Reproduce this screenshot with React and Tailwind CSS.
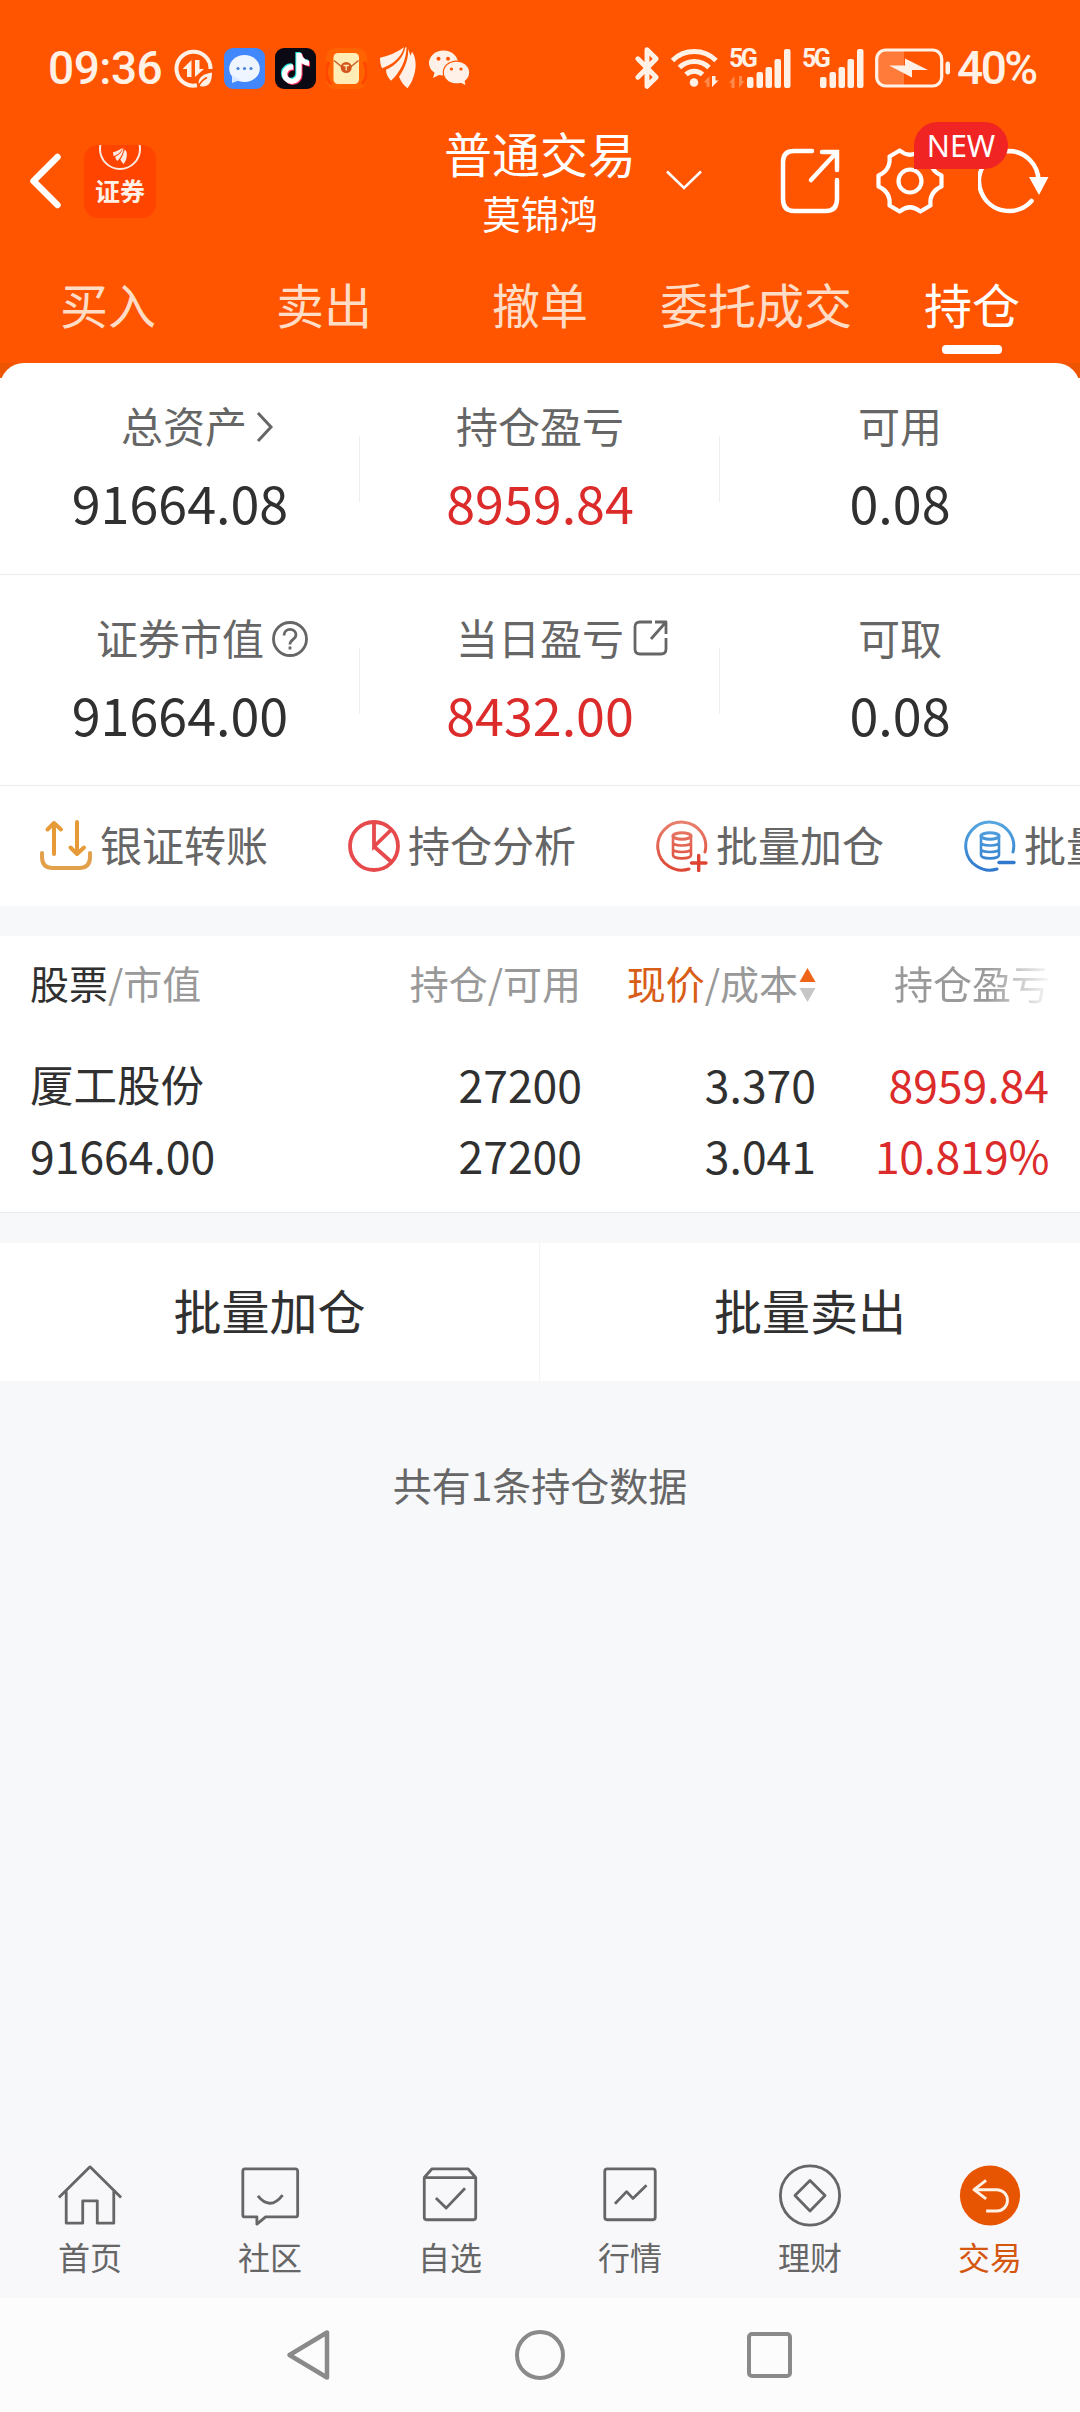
import { Bluetooth } from 'lucide-react'
import { FaTiktok } from 'react-icons/fa6'

const tabs = ['买入', '卖出', '撤单', '委托成交', '持仓']

function FlowIcon() {
  return (
    <svg width="39" height="39" viewBox="0 0 39 39" fill="none" className="shrink-0">
      <path d="M36.500 20A17 17 0 1 0 23 36.300" stroke="#fff1e6" strokeWidth="4" />
      <path d="M17.500 28V11L8.500 20h4.500v8zM21 11v17l9-8h-4.500v-9z" fill="#fff1e6" />
      <path d="M38 23.500c0 9-3 14-9 14-2 0-3-.5-4-1.500-2-6 3-11 13-12.500z" fill="#fff1e6" />
      <path d="M24 38.500c2-5 5-8 9-10" stroke="#ff5500" strokeWidth="1.500" />
    </svg>
  )
}

function MessageIcon() {
  return (
    <svg width="41" height="41" viewBox="0 0 41 41" className="shrink-0">
      <rect width="41" height="41" rx="9" fill="#4287fb" />
      <ellipse cx="20.500" cy="20.500" rx="15.300" ry="13.500" fill="#eef5ff" />
      <path d="M8 27v8l8-3z" fill="#d9e9ff" />
      <circle cx="14" cy="20.500" r="1.600" fill="#4a83dc" />
      <circle cx="20.500" cy="20.500" r="1.600" fill="#4a83dc" />
      <circle cx="27" cy="20.500" r="1.600" fill="#4a83dc" />
    </svg>
  )
}

function TiktokIcon() {
  return (
    <div className="relative h-[41px] w-[41px] shrink-0 rounded-[9px] bg-[#0b0a14]">
      <FaTiktok size={31} className="absolute left-[4px] top-[4px] text-[#25e4df]" />
      <FaTiktok size={31} className="absolute left-[6px] top-[6px] text-[#f5315c]" />
      <FaTiktok size={31} className="absolute left-[5px] top-[5px] text-white" />
    </div>
  )
}

function EnvelopeIcon() {
  return (
    <svg width="41" height="41" viewBox="0 0 41 41" className="shrink-0">
      <rect width="41" height="41" rx="9" fill="#ff6200" />
      <path d="M3 14a19 19 0 0 0 2 22M38 14a19 19 0 0 1-2 22" stroke="#ff4500" strokeWidth="3" fill="none" />
      <rect x="7.500" y="5" width="25.500" height="31" rx="4.500" fill="#ffedb5" />
      <path d="M8 12.500l8 6.500M32.500 12.500l-8 6.500" stroke="#c8642b" strokeWidth="1.600" />
      <circle cx="20.200" cy="19.500" r="5.500" fill="#d3541c" />
      <path d="M17.500 17.500h5.500M20.200 17.500v5" stroke="#ffedb5" strokeWidth="1.300" />
    </svg>
  )
}

function Swoosh({ size, color }) {
  return (
    <svg width={size} height={size * 1.15} viewBox="0 0 36 41" fill={color} className="shrink-0">
      <path d="M24 0C17 5 9 8.500 0 10.500c0 4 .5 7 2 10.500C12 17.500 21 11 24 0z" />
      <path d="M25.300 0C24 9 17 17.500 6 22.500c0 4 2 8 5 11C20 25 26.500 13 26.500 0z" />
      <path d="M28 1.500c1 10-3.500 20-9 28 2 5 5 9 8.500 11.500C35 32 39 14 32 4.500l-1.500 4z" />
    </svg>
  )
}

function WechatIcon() {
  return (
    <svg width="41" height="36" viewBox="0 0 41 36" className="shrink-0">
      <ellipse cx="14.500" cy="13" rx="14.500" ry="12.500" fill="#fff1e8" />
      <path d="M6 21l-2 7 8-4z" fill="#fff1e8" />
      <ellipse cx="27.500" cy="22.500" rx="13.800" ry="12" fill="#ff5500" />
      <ellipse cx="27.500" cy="22.500" rx="12.600" ry="10.800" fill="#fff1e8" />
      <path d="M30 32l6.500 3-1.500-6z" fill="#fff1e8" />
      <circle cx="9.500" cy="8.800" r="2" fill="#ff5500" />
      <circle cx="19" cy="8.800" r="2" fill="#ff5500" />
      <circle cx="22.500" cy="19" r="1.600" fill="#ff5500" />
      <circle cx="32" cy="19" r="1.600" fill="#ff5500" />
    </svg>
  )
}

function WifiIcon() {
  return (
    <svg width="48" height="39" viewBox="0 0 48 39" fill="none" className="shrink-0">
      <g stroke="#fff1e6" strokeWidth="5">
        <path d="M1.500 11.500a31 31 0 0 1 43.500 0" />
        <path d="M8.500 18.500a21 21 0 0 1 29.500 0" />
        <path d="M15 25.500a12 12 0 0 1 16.500 0" />
      </g>
      <circle cx="23" cy="33.500" r="4.300" fill="#fff1e6" />
      <path d="M38.500 38V27l-6 6.500h3V38z" fill="#ff8a4d" />
      <path d="M41 27v11l6.500-6.500h-3V27z" fill="#fff1e6" />
    </svg>
  )
}

function SignalIcon({ arrows }) {
  return (
    <div className="relative h-[39px] w-[62px] shrink-0">
      <span className="absolute left-0 top-[-2px] font-['Roboto',sans-serif] text-[25px] font-bold leading-[24px] tracking-[-2.500px]">5G</span>
      <svg width="62" height="39" viewBox="0 0 62 39">
        {arrows && <path d="M5.500 39V27L0 34h2.500v5zM10 27v12l5.500-7H13v-5z" fill="#ff8a4d" />}
        <g fill="#fff1e6">
          <rect x="18" y="28" width="6.500" height="11" rx="2" />
          <rect x="27.500" y="23" width="6.500" height="16" rx="2" />
          <rect x="36.500" y="18" width="6.500" height="21" rx="2" />
          <rect x="45.500" y="10" width="6.500" height="29" rx="2" />
          <rect x="55" y="0" width="6.500" height="39" rx="2" />
        </g>
      </svg>
    </div>
  )
}

function BatteryIcon() {
  return (
    <svg width="76" height="40" viewBox="0 0 76 40" className="shrink-0">
      <path d="M9 3h20v34H9c-4 0-6-3-6-6V9c0-3 2-6 6-6z" fill="#ff7b3a" />
      <rect x="1.700" y="2" width="65" height="36" rx="9" fill="none" stroke="#fff1e6" strokeWidth="3.200" />
      <path d="M14 17.500h16v-7l23 11.500H37v7.500z" fill="#fff1e6" />
      <rect x="70.500" y="13.500" width="4.500" height="13" rx="2.200" fill="#fff1e6" />
    </svg>
  )
}

function StatusBar() {
  return (
    <div className="flex h-[136px] items-center text-[#fff1e6]">
      <span className="ml-[48px] w-[126px] font-['Roboto',sans-serif] text-[46px] font-medium leading-none tracking-[-0.500px]">09:36</span>
      <FlowIcon />
      <div className="ml-[11px] flex items-center gap-[10px]">
        <MessageIcon />
        <TiktokIcon />
        <EnvelopeIcon />
      </div>
      <div className="ml-[13px] flex items-center gap-[13px]">
        <Swoosh size={36} color="#fff1e8" />
        <WechatIcon />
      </div>
      <div className="ml-auto mr-[42px] flex items-center">
        <Bluetooth size={44} strokeWidth={2.700} className="mr-[2px]" />
        <WifiIcon />
        <div className="ml-[10px] mr-[11px] flex gap-[11px]">
          <SignalIcon arrows />
          <SignalIcon />
        </div>
        <BatteryIcon />
        <span className="ml-[6px] w-[81px] whitespace-nowrap font-['Roboto',sans-serif] text-[46px] font-medium leading-none tracking-[-2.500px]">40%</span>
      </div>
    </div>
  )
}

function TitleBar() {
  return (
    <div className="flex h-[118px] items-start pt-[2px]">
      <svg width="34" height="56" viewBox="0 0 34 56" fill="none" stroke="#fff" strokeWidth="6.500" strokeLinecap="round" strokeLinejoin="round" className="ml-[29px] mt-[15px]">
        <path d="M28.500 4L4.500 28l24 24" />
      </svg>
      <div className="ml-[21px] mt-[7px] flex h-[73px] w-[72px] flex-col items-center overflow-hidden rounded-[14px] bg-[#ff4400]">
        <div className="mt-[-17px] flex h-[42px] w-[42px] shrink-0 items-end justify-center rounded-full border-2 border-[#ffe9e0] pb-[4px]">
          <Swoosh size={14} color="#ffe9e0" />
        </div>
        <span className="mt-[5px] text-[25px] font-bold leading-[30px] text-[#fff1e8]">证券</span>
      </div>
      <div className="ml-[286px] flex w-[196px] flex-col items-center text-white">
        <span className="mt-[-18px] text-[48px] leading-[64px]">普通交易</span>
        <span className="text-[38.500px] leading-[56px]">莫锦鸿</span>
      </div>
      <svg width="36" height="20" viewBox="0 0 36 20" fill="none" stroke="#fff" strokeWidth="2.500" className="ml-[28px] mt-[32px]">
        <path d="M1 1.500L18 18 35 1.500" />
      </svg>
      <svg width="61" height="66" viewBox="0 0 61 66" fill="none" stroke="#fff" strokeWidth="4.500" strokeLinecap="round" className="ml-[78px] mt-[10px]">
        <path d="M32 3H14Q3 3 3 14v37q0 12 11 12h32q11 0 11-12V32" />
        <path d="M42 4h15v18M56 5L31 32" />
      </svg>
      <div className="relative ml-[35px] mt-[9px]">
        <svg width="68" height="68" viewBox="-34 -34 68 68" fill="none" stroke="#fff" strokeWidth="4.200" strokeLinejoin="round">
          <path d="M-10.300-30.500Q0-22 10.300-30.500L20.500-24.500Q19-11 31.500-5.500V5.500Q19 11 20.500 24.500L10.300 30.500Q0 22-10.300 30.500L-20.500 24.500Q-19 11-31.500 5.500V-5.500Q-19-11-20.500-24.500Z" />
          <circle r="11.500" />
        </svg>
        <span className="absolute left-[38px] top-[-25px] z-10 flex h-[47px] w-[94px] items-center justify-center rounded-full rounded-bl-none bg-[#f12424] font-['Noto_Sans',sans-serif] text-[30.500px] text-white">
          NEW
        </span>
      </div>
      <svg width="72" height="66" viewBox="0 0 72 66" fill="none" className="ml-[34px] mt-[10px]">
        <path d="M31 3a30 30 0 0 1 29.500 30M53.500 53A30 30 0 1 1 31 3" stroke="#fff" strokeWidth="4.500" strokeLinecap="round" />
        <path d="M51 29h19.500L61 47z" fill="#fff" />
      </svg>
    </div>
  )
}

function Tabs() {
  return (
    <div className="grid h-[109px] grid-cols-5">
      {tabs.map((t, i) => (
        <div key={t} className={i === 4 ? 'flex flex-col items-center text-white' : 'flex flex-col items-center text-[#ffdcc6]'}>
          <span className="mt-[17px] text-[48px] leading-[64px]">{t}</span>
          {i === 4 && <span className="mt-[10px] h-[9px] w-[60px] rounded-[4px] bg-white" />}
        </div>
      ))}
    </div>
  )
}

function Stat({ label, icon, value, red, last }) {
  return (
    <div className="relative flex flex-col items-center">
      <div className="mt-[30px] flex h-16 items-center text-[42px] leading-[64px] text-[#666]">
        <span>{label}</span>
        {icon}
      </div>
      <span className={red ? 'mt-[13px] text-[52px] leading-[64px] text-[#dc2b2b]' : 'mt-[13px] text-[52px] leading-[64px] text-[#303030]'}>{value}</span>
      {!last && <span className="absolute right-0 top-[73px] h-[66px] w-px bg-[#eee]" />}
    </div>
  )
}

const chevron = (
  <svg width="18" height="32" viewBox="0 0 18 32" fill="none" stroke="#666" strokeWidth="3" className="ml-[9px] mr-[-35px] mt-[4px]">
    <path d="M2 2l13 14L2 30" />
  </svg>
)

const help = (
  <svg width="38" height="38" viewBox="0 0 38 38" fill="none" stroke="#666" strokeWidth="2.800" className="ml-[7px] mr-[-45px] mt-[3px]">
    <circle cx="19" cy="19" r="16.500" />
    <path d="M13 15.500c0-8 12-8 12-.5 0 4.500-6 4.500-6 9.500" />
    <path d="M19 26.500v3" />
  </svg>
)

const share = (
  <svg width="35" height="36" viewBox="0 0 35 36" fill="none" stroke="#666" strokeWidth="2.800" strokeLinejoin="round" className="ml-[9px] mr-[-44px] mt-[2px]">
    <path d="M19 2H7Q2 2 2 7v22q0 5 5 5h21q5 0 5-5V18M22 2h11v12M33 2L18 19" />
  </svg>
)

function TransferIcon() {
  return (
    <svg width="52" height="52" viewBox="0 0 52 52" fill="none" stroke="#e79a38" strokeWidth="4" strokeLinecap="round" strokeLinejoin="round">
      <path d="M14 34V3M7.500 9.500L14 3l7 6.500M37 2v32M30.500 27.500L37 34l7-6.500" />
      <path d="M2 33v4q0 11 11 11h26q11 0 11-11v-4" stroke="#e2a04b" />
    </svg>
  )
}

function PieIcon() {
  return (
    <svg width="52" height="52" viewBox="0 0 52 52" fill="none" stroke="#e64a4c" strokeWidth="3.800">
      <circle cx="26" cy="26" r="24" />
      <path d="M26 2v24.500L43.500 9.500M26 26.500L43.500 42" />
    </svg>
  )
}

function CoinsIcon({ id, from, to, plus }) {
  return (
    <svg width="52" height="52" viewBox="0 0 52 52" fill="none" stroke={`url(#${id})`} strokeWidth="3" strokeLinecap="round">
      <defs>
        <linearGradient id={id} gradientUnits="userSpaceOnUse" x1="0" y1="0" x2="0" y2="52">
          <stop offset="0" stopColor={from} />
          <stop offset="1" stopColor={to} />
        </linearGradient>
      </defs>
      <path d="M49 32A24 24 0 1 0 33 49" />
      <ellipse cx="26" cy="16" rx="9" ry="3.200" />
      <path d="M17 16v19c0 4.500 18 4.500 18 0V16M17 22.500c0 4 18 4 18 0M17 29c0 4 18 4 18 0" strokeWidth="2.600" />
      <path d={plus ? 'M35.500 43h14.500M42.700 35.500v15' : 'M35 42.500h15'} stroke={to} strokeWidth="3.400" />
    </svg>
  )
}

const actions = [
  { text: '银证转账', icon: <TransferIcon /> },
  { text: '持仓分析', icon: <PieIcon /> },
  { text: '批量加仓', icon: <CoinsIcon id="coins-buy" from="#e98170" to="#dd4532" plus /> },
  { text: '批量卖出', icon: <CoinsIcon id="coins-sell" from="#57a8e0" to="#2f78cc" /> },
]

function Holdings() {
  return (
    <div className="h-[277px] shrink-0 border-b border-[#e8eaec] bg-white text-[#303030]">
      <div className="flex h-[92px] items-center pl-[30px] text-[39px] leading-[60px] text-[#999]">
        <span className="w-[260px]"><span className="text-[#303030]">股票</span>/市值</span>
        <span className="w-[291px] text-right">持仓/可用</span>
        <span className="w-[217px] text-right"><span className="text-[#d85d17]">现价</span>/成本</span>
        <svg width="17" height="36" viewBox="0 0 17 36" className="ml-[1px] mt-[6px]">
          <path d="M8.500 1L16.500 15H.5z" fill="#ee651a" />
          <path d="M8.500 35L16.500 21H.5z" fill="#c6c6c6" />
        </svg>
        <span className="ml-[78px] bg-gradient-to-r from-[#999] from-60% to-[#99999910] bg-clip-text text-transparent">持仓盈亏</span>
      </div>
      <div className="mt-[20px] grid h-[71px] grid-cols-[260px_292px_234px_233px] items-center pl-[30px] text-[44.500px] leading-[60px]">
        <span className="text-[43.500px]">厦工股份</span>
        <span className="text-right">27200</span>
        <span className="text-right">3.370</span>
        <span className="text-right text-[#dc2b2b]">8959.84</span>
      </div>
      <div className="grid h-[72px] grid-cols-[260px_292px_234px_233px] items-center pl-[30px] text-[44.500px] leading-[60px]">
        <span>91664.00</span>
        <span className="text-right">27200</span>
        <span className="text-right">3.041</span>
        <span className="text-right tracking-[-0.400px] text-[#dc2b2b]">10.819%</span>
      </div>
    </div>
  )
}

const nav = [
  { text: '首页', icon: <path d="M2 35L34 3.500 66 35M9.500 28.500V61.500H26.500V38.500H41.500V61.500H58.500V28.500" /> },
  { text: '社区', icon: <><path d="M8 5.500h52q2.500 0 2.500 2.500v45q0 2-2.500 2H29.500L20.500 62.500V55H8q-2 0-2-2V8q0-2.500 2-2.500z" /><path d="M21.500 33.500q12.500 15.500 25.500-1" /></> },
  { text: '自选', icon: <><path d="M7.500 14.500h53v41q0 2.500-2.500 2.500H10q-2.500 0-2.500-2.500zM7.500 14.500l8-9h37l8 9" /><path d="M19.500 35.500L30 46 49.500 25.500" /></> },
  { text: '行情', icon: <><rect x="8" y="5.500" width="52" height="52.500" rx="2.500" /><path d="M18.500 41.500L30.500 29l6.500 7L51 22.500" /></> },
  { text: '理财', icon: <><circle cx="34" cy="33" r="30.500" /><path d="M34 17.500L49.500 33 34 49 18.500 33z" /></> },
  { text: '交易', active: true, icon: <><circle cx="34" cy="33" r="31" fill="#e85502" stroke="none" /><path d="M30 17.500L17.500 27 30 36.500M18 27h23a11 11 0 0 1 0 22H30" stroke="#fff1e6" strokeWidth="3" /></> },
]

function BottomNav() {
  return (
    <div className="grid h-[148px] grid-cols-6 bg-[#f8f8fb]">
      {nav.map(n => (
        <div key={n.text} className="flex flex-col items-center pt-[13px]">
          <svg width="66" height="65" viewBox="0 0 68 66" fill="none" stroke="#666" strokeWidth="2.900" strokeLinejoin="round">{n.icon}</svg>
          <span className={n.active ? 'mt-[6px] text-[32px] leading-[44px] text-[#d4560f]' : 'mt-[6px] text-[32px] leading-[44px] text-[#666]'}>{n.text}</span>
        </div>
      ))}
    </div>
  )
}

export default function App() {
  return (
    <div className="flex h-[2412px] w-[1080px] flex-col overflow-hidden bg-[#f7f8fa] font-['Noto_Sans_CJK_SC',sans-serif]">
      <header className="h-[363px] shrink-0 bg-[#ff5500]">
        <StatusBar />
        <TitleBar />
        <Tabs />
      </header>

      <div className="bg-[linear-gradient(#ee5503_15px,#fff_15px)]">
        <section className="rounded-t-[24px] bg-white">
          <div className="grid h-[212px] grid-cols-3 border-b border-[#ececec]">
            <Stat label="总资产" icon={chevron} value="91664.08" />
            <Stat label="持仓盈亏" value="8959.84" red />
            <Stat label="可用" value="0.08" last />
          </div>
          <div className="grid h-[211px] grid-cols-3 border-b border-[#ececec]">
            <Stat label="证券市值" icon={help} value="91664.00" />
            <Stat label="当日盈亏" icon={share} value="8432.00" red />
            <Stat label="可取" value="0.08" last />
          </div>
          <div className="flex h-[120px] overflow-hidden pl-[40px]">
            {actions.map(a => (
              <div key={a.text} className="flex w-[308px] shrink-0 items-center gap-[8px] text-[42px] text-[#666]">
                {a.icon}
                <span className="whitespace-nowrap pb-[4px] leading-[60px]">{a.text}</span>
              </div>
            ))}
          </div>
        </section>
      </div>

      <div className="h-[30px] shrink-0" />
      <Holdings />

      <div className="mt-[30px] grid h-[138px] shrink-0 grid-cols-2 bg-white text-[48px] text-[#303030]">
        <span className="flex items-center justify-center border-r border-[#f4f4f4] pb-[6px] leading-[64px]">批量加仓</span>
        <span className="flex items-center justify-center pb-[6px] leading-[64px]">批量卖出</span>
      </div>
      <p className="mt-[74px] text-center text-[39px] leading-[58px] text-[#666]">共有1条持仓数据</p>

      <div className="mt-auto">
        <BottomNav />
        <div className="flex h-[114px] items-center bg-[#fcfcfc]">
          <svg width="46" height="54" viewBox="0 0 46 54" fill="none" stroke="#8a8a8a" strokeWidth="4.500" strokeLinejoin="round" className="ml-[286px]">
            <path d="M3.500 27L41 4.500v45z" />
          </svg>
          <span className="ml-[183px] h-[50px] w-[50px] rounded-full border-[4.500px] border-[#8a8a8a]" />
          <span className="ml-[182px] h-[46px] w-[45px] rounded-[5px] border-[4.500px] border-[#8a8a8a]" />
        </div>
      </div>
    </div>
  )
}
